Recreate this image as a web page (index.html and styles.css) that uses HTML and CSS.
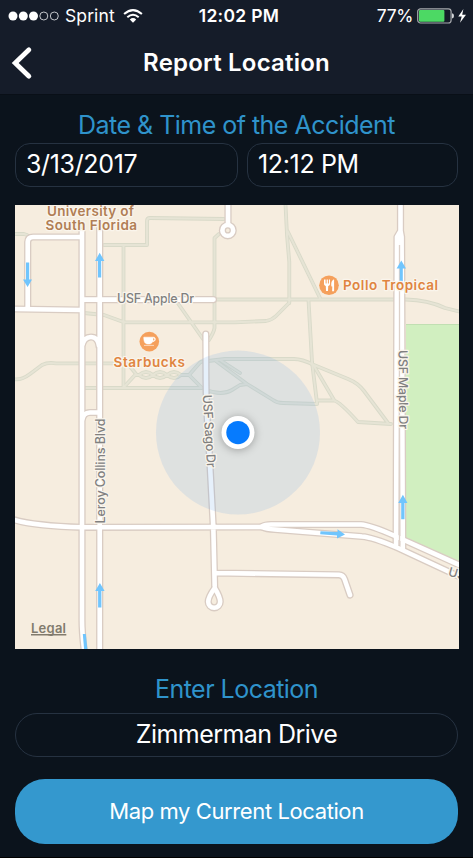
FILE: index.html
```html
<!DOCTYPE html>
<html lang="en">
<head>
<meta charset="utf-8">
<title>Report Location</title>
<link rel="stylesheet" href="styles.css">
</head>
<body>
<div class="screen">
  <header class="header">
    <div class="status">
      <div class="status-left">
        <svg class="signal" width="52" height="12" viewBox="0 0 52 12">
          <g fill="#fff"><circle cx="5" cy="6" r="4.5"/><circle cx="15.3" cy="6" r="4.5"/><circle cx="25.5" cy="6" r="4.5"/></g>
          <g fill="none" stroke="#c3c6ca" stroke-width="1"><circle cx="35.8" cy="6" r="4"/><circle cx="46.3" cy="6" r="4"/></g>
        </svg>
        <span class="carrier">Sprint</span>
        <svg class="wifi" width="20" height="14" viewBox="0 0 20 14">
          <g fill="none" stroke="#fff" stroke-width="2"><path d="M1.1 5.1Q10-2.8 18.9 5.1"/><path d="M4.3 8.3Q10 3.2 15.7 8.3"/></g>
          <path d="M6.8 10.5Q10 7.6 13.2 10.5L10 13.8Z" fill="#fff"/>
        </svg>
      </div>
      <span class="clock">12:02 PM</span>
      <div class="status-right">
        <span class="percent">77%</span>
        <svg class="battery" width="50" height="16" viewBox="0 0 50 16">
          <rect x=".7" y=".8" width="33.4" height="14.2" rx="2.8" fill="none" stroke="#a6a9ad" stroke-width="1.2"/>
          <rect x="2" y="2" width="25.4" height="11.8" rx="1" fill="#4cd964"/>
          <path d="M35 5.2q2 .4 2 2.7t-2 2.7z" fill="#d5d7da"/>
          <path d="M46.4 1 41.3 8.5h3.4L43 14.8 49 6.8h-3.8z" fill="#fff"/>
        </svg>
      </div>
    </div>
    <div class="nav">
      <svg class="back" width="22" height="34" viewBox="0 0 22 34"><path d="M17.9 3.8 4.2 17 17.9 30.2" fill="none" stroke="#fff" stroke-width="4.8" stroke-linecap="round" stroke-linejoin="miter"/></svg>
      <h1 class="title">Report Location</h1>
    </div>
  </header>

  <main class="content">
    <h2 class="label label-date">Date &amp; Time of the Accident</h2>
    <div class="fields">
      <div class="field date">3/13/2017</div>
      <div class="field time"><span>12:12 PM</span></div>
    </div>

    <svg class="map" width="444" height="444" viewBox="15 205 444 444">
      <defs>
        <g id="paths">
          <path d="M15 234H24L27 235M104 245H147V221Q147 218 150 218L224 219M123.5 245V388M84 313 104 315 124 322.3H235L266 321Q272 320 276 316L289 303M219 234 214.5 238V328Q214 332 209 340M177 302 203 339M214 299.5H406Q428 300 445 308L459 311.5"/>
          <path d="M285.5 205 287 235 289.3 262V303M287.5 231 320 298M308.5 300 312 362 317 403"/>
          <path d="M15 379.3Q22 380 30 374L42 365Q48 362 56 363.4H124M84 388H202M124 387 136 374 128 364M135 375H139M189 375 202 388M189 375 200 362.5Q202 361 208 361"/>
          <path d="M139 375Q146 369 153 375T167 375T181 375L189 375M139 375Q146 381 153 375T167 375T181 375"/>
          <path d="M208 361 225 359H294Q302 359 314 365L348 379Q358 383 364 391L388 423M216 361 247 384 273 400Q277 403 283 403L317 404M206 390Q222 396 232 390L240 385 247 384M220 360 240 373M314 366 334 400M317 400.5H334Q340 402 358 422L391 424"/>
        </g>
        <g id="roads">
          <path d="M82 231V620Q82 632 84 649M99.7 226V649M27.7 309V242Q28 237 33 237H82M14 309 82 310M82 299.6H213.5M82 346Q84 337 91 337T99 346M82 421Q83 412.5 90 412.5H99"/>
          <path d="M228 204V224M205.8 334 206 380Q206 405 208.5 437L213.3 527 214.7 586M14 519.8Q35 526 82 527.3L262 527M215 573 339 574.8Q343 575 344.5 579L350 595"/>
          <circle cx="227.8" cy="230.4" r="5.4"/>
          <path d="M214.7 588Q208.2 597 208.2 601.8A6 6 0 0 0 220.2 601.8Q220.2 597 214.7 588"/>
          <path d="M262 526.5Q265 524.5 271 524.5H361Q370 525 395 536L459 564.8M262 527Q266 529 275 529.5L362 536.5Q372 537 398 548L458 576"/>
          <path d="M400.5 203V231L397 237 396.1 545M400.5 231 401.6 237 402.8 549"/>
        </g>
      </defs>
      <rect x="14" y="205" width="446" height="444" fill="#f6eddf"/>
      <path d="M406 324.5H459V563L405 540Z" fill="#d1efc0"/>
      <path d="M406 324.5H459" fill="none" stroke="#c1dfb2"/>
      <use href="#paths" class="path-edge"/>
      <use href="#paths" class="path-fill"/>
      <use href="#roads" class="road-edge"/>
      <use href="#roads" class="road-fill"/>
      <path d="M399.5 245V545" stroke="#ddd1c9" stroke-width="1.3"/>

      <g fill="#70c5fd">
        <path d="M26 262.5h3.2v17H32L27.6 287 23 279.5H26z"/>
        <path d="M98 277.5h3.2V261H104.4L99.7 252.8 95 261H98z"/>
        <path d="M399.8 283h3V268.5H406L401.3 260.5 396.6 268.5h3.2z"/>
        <path d="M98.1 607.5h3.3V591H104.6L99.9 583 95.2 591h2.9z"/>
        <path d="M401.2 519.3h3.3V503H407.5L402.9 494.8 398.2 503h3z"/>
        <path d="M320.5 531.2 337.5 532V529.3L345 534.5 337 538.5V535.5L320.2 534.3z"/>
        <path d="M82.8 634h3L87.4 649h-3.3z"/>
      </g>

      <circle cx="238" cy="432.6" r="82" fill="#69a8e5" fill-opacity=".17"/>

      <g class="map-text campus">
        <text x="47" y="215.5" textLength="87">University of</text>
        <text x="45.5" y="230.3" textLength="91.5">South Florida</text>
      </g>
      <g class="map-text street">
        <text x="117" y="303.4" textLength="77">USF Apple Dr</text>
        <text transform="translate(104.5 523.5) rotate(-90)" textLength="105">Leroy Collins Blvd</text>
        <text transform="translate(202.7 395) rotate(86.5)" textLength="73">USF Sago Dr</text>
        <text transform="translate(398.5 350) rotate(89.5)" textLength="79">USF Maple Dr</text>
        <text transform="translate(447.5 575.5) rotate(16)">US</text>
      </g>
      <g class="map-text place">
        <text x="113.5" y="367.3" textLength="71.5">Starbucks</text>
        <text x="343" y="290.3" textLength="95">Pollo Tropical</text>
      </g>
      <text class="legal" x="31" y="633" textLength="35">Legal</text>
      <path d="M31 634.8H66.3" stroke="#817b6d" stroke-width="1.4"/>

      <circle cx="149.3" cy="341.6" r="9.8" fill="#f5a05c"/>
      <path d="M143.8 337.2h9.3c3.1-.5 3.2 4.5-.6 4.5-1 1.9-2 2.3-4 2.3-3.3 0-4.7-1.5-4.7-6.8zM144 345.4h10" fill="#fff" stroke="#fff" stroke-width=".6"/>
      <path d="M153.2 338.3v2.3c1.7 0 1.6-2.4 0-2.3z" fill="#f5a05c"/>
      <circle cx="329" cy="285.3" r="9.8" fill="#f5a05c"/>
      <path d="M324 279.5v4c0 2 1 2 1.8 2.5L326 291h2l.2-5c1-.5 1.8-.5 1.8-2.5v-4h-1.1v4h-1v-4h-1.3v4h-1v-4zM333.5 279.4c-2.5 1.5-2.4 5-2 7h.8l-.2 4.8h2v-11.8z" fill="#fff"/>

      <circle class="location-ring" cx="238" cy="432.6" r="16.5"/>
      <circle cx="238" cy="432.6" r="11.7" fill="#067bfe"/>
    </svg>

    <h2 class="label label-location">Enter Location</h2>
    <div class="field location"><span>Zimmerman Drive</span></div>
    <button class="map-button" type="button"><span>Map my Current Location</span></button>
  </main>
</div>
</body>
</html>
```

FILE: styles.css
```css
* { box-sizing: border-box; }

body {
  margin: 0;
  background: #0b131c;
  color: #fff;
  font-family: Inter, "Liberation Sans", sans-serif;
}

.screen {
  width: 473px;
  height: 858px;
  overflow: hidden;
  border-bottom: 1px solid #000;
}

.header {
  height: 95px;
  background: #151c29;
  border-bottom: 1px solid #090f17;
}

.status {
  display: grid;
  grid-template-columns: 1fr auto 1fr;
  align-items: center;
  height: 30px;
  padding: 0 6px 0 8px;
  font-size: 17.5px;
  line-height: 31px;
}

.status-left, .status-right { display: flex; align-items: center; }
.status-right { justify-content: flex-end; }
.signal { flex: none; }
.carrier { margin-left: 5px; letter-spacing: .1px; }
.wifi { margin-left: 8px; }
.clock { font-weight: 600; letter-spacing: .3px; padding-left: 3px; }
.percent { margin-right: 4px; letter-spacing: -.4px; }

.nav {
  display: grid;
  grid-template-columns: 60px 1fr 60px;
  align-items: center;
  height: 64px;
}

.back { margin-left: 11px; }

.title {
  margin: 0;
  font-size: 24px;
  font-weight: 600;
  line-height: 65px;
  letter-spacing: .2px;
  text-align: center;
  white-space: nowrap;
}

.content { padding: 0 15px; }

.label {
  margin: 0;
  color: #2f93cb;
  font-size: 25px;
  font-weight: 400;
  letter-spacing: -.52px;
  text-align: center;
  white-space: nowrap;
}

.label-date { height: 48px; line-height: 60px; }

.fields {
  display: grid;
  grid-template-columns: 223px 211px;
  gap: 9px;
}

.field {
  height: 44px;
  border: 1px solid #263241;
  border-radius: 15px;
  padding-left: 10px;
  font-size: 25px;
  line-height: 40px;
  letter-spacing: -.35px;
}

.map { display: block; margin-top: 18px; }

.label-location { height: 64px; line-height: 80px; }

.location {
  border-radius: 22px;
  padding: 0;
  letter-spacing: -.55px;
  text-align: center;
}

.map-button {
  display: block;
  width: 100%;
  height: 65px;
  margin-top: 22px;
  border: 0;
  border-radius: 30px;
  padding: 0;
  background: #3498ce;
  color: #fff;
  font: 400 22px/65px Inter, "Liberation Sans", sans-serif;
  letter-spacing: -.4px;
}

.path-edge, .path-fill, .road-edge, .road-fill {
  fill: none;
  stroke-linejoin: round;
  stroke-linecap: round;
}
.path-edge { stroke: #d9dac9; stroke-width: 3.8px; }
.path-fill { stroke: #e6e4d5; stroke-width: 2px; }
.road-edge { stroke: #d9ccc3; stroke-width: 7.2px; }
.road-fill { stroke: #fff; stroke-width: 4.6px; }

.map-text {
  paint-order: stroke;
  stroke: #faf5ec;
  stroke-width: 2.5px;
  stroke-linejoin: round;
}
.campus { fill: #b17e55; font-size: 13.5px; font-weight: 600; }
.street { fill: #808080; font-size: 12.5px; font-weight: 500; }
.place { fill: #e08440; font-size: 13.5px; font-weight: 600; }
.legal { fill: #817b6d; font-size: 13px; font-weight: 600; }

.location-ring {
  fill: #fff;
  filter: drop-shadow(0 1px 4px rgba(0, 0, 0, .3));
}
```
